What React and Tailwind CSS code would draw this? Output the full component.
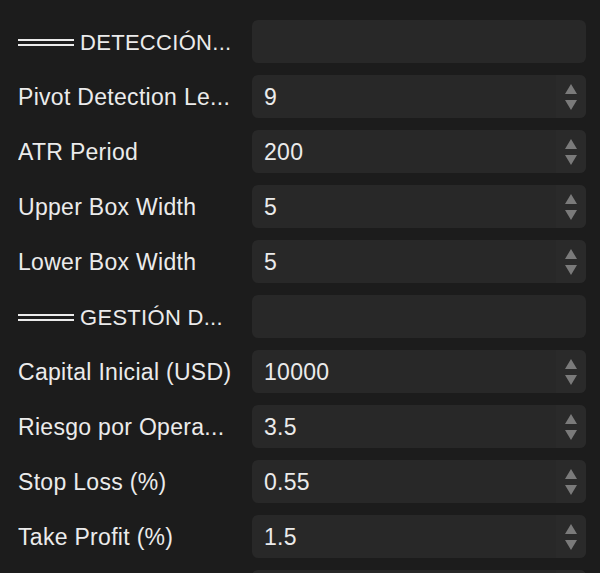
import React from 'react';

const rows = [
  { type: 'header', label: 'DETECCIÓN...' },
  { label: 'Pivot Detection Le...', value: '9' },
  { label: 'ATR Period', value: '200' },
  { label: 'Upper Box Width', value: '5' },
  { label: 'Lower Box Width', value: '5' },
  { type: 'header', label: 'GESTIÓN D...' },
  { label: 'Capital Inicial (USD)', value: '10000' },
  { label: 'Riesgo por Opera...', value: '3.5' },
  { label: 'Stop Loss (%)', value: '0.55' },
  { label: 'Take Profit (%)', value: '1.5' },
  { label: '', value: '' },
];

const Spinner = () => (
  <div className="flex flex-col items-center justify-center gap-[6px] w-[30px] h-full bg-[#2a2a2a] rounded-r-[6px]">
    <svg width="12" height="10" viewBox="0 0 12 10">
      <polygon points="6,0 12,10 0,10" fill="#7a7a7a" />
    </svg>
    <svg width="12" height="10" viewBox="0 0 12 10">
      <polygon points="0,0 12,0 6,10" fill="#7a7a7a" />
    </svg>
  </div>
);

const App = () => {
  return (
    <div
      className="w-[600px] h-[573px] overflow-hidden bg-[#1c1c1c] pt-[20px] pl-[18px] pr-[14px] flex flex-col gap-[12px] text-[#ebebeb] text-[23px] tracking-[0.3px]"
      style={{ fontFamily: '"Liberation Sans", Arial, sans-serif' }}
    >
      {rows.map((row, i) => (
        <div key={i} className="flex items-center h-[43px] shrink-0">
          <div className="w-[234px] shrink-0 flex items-center whitespace-nowrap overflow-hidden pt-[2px]">
            {row.type === 'header' ? (
              <>
                <div className="flex flex-col gap-[3px] w-[56px] mr-[6px]">
                  <div className="h-[2px] bg-[#ebebeb]" />
                  <div className="h-[2px] bg-[#ebebeb]" />
                </div>
                <span className="text-[22px]">{row.label}</span>
              </>
            ) : (
              <span>{row.label}</span>
            )}
          </div>
          <div className="flex-1 h-full flex items-center bg-[#282828] rounded-[6px]">
            {row.type === 'header' ? null : (
              <>
                <span className="flex-1 pl-[12px] pt-[2px]">{row.value}</span>
                <Spinner />
              </>
            )}
          </div>
        </div>
      ))}
    </div>
  );
};

export default App;
